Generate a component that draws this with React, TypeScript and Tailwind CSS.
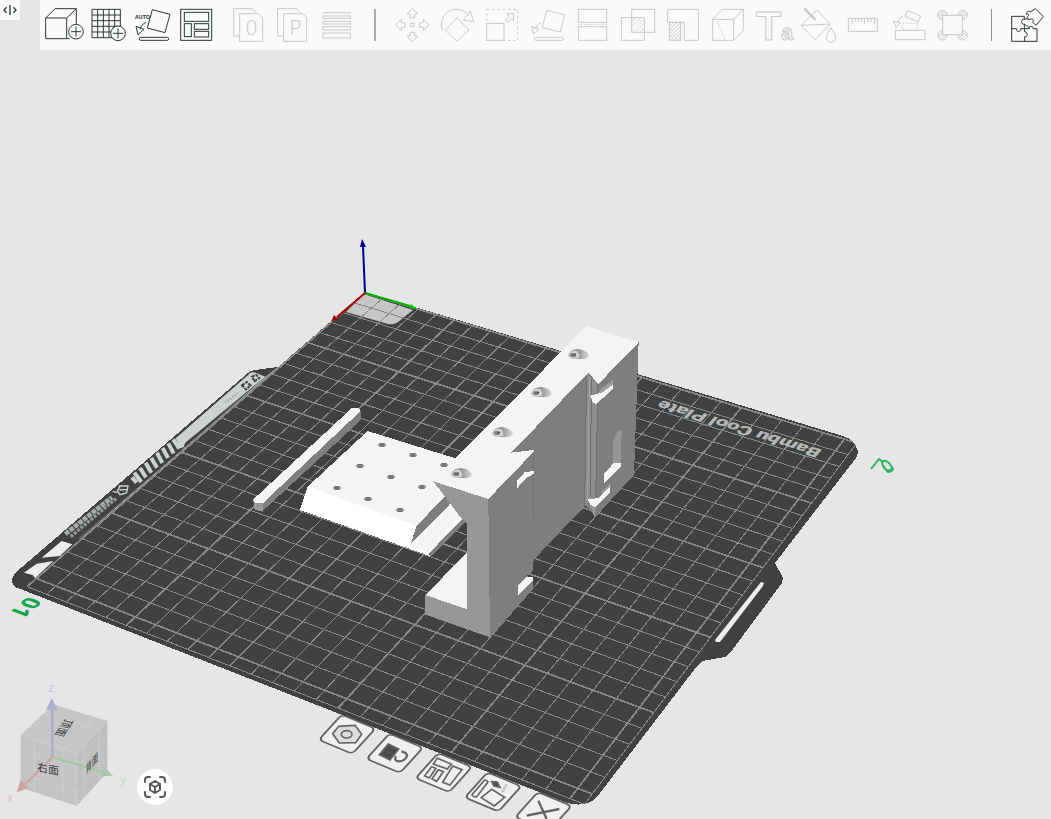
import React from "react";

type Tool = {
  label: string;
  // left edge of the icon in the drawing units of the toolbar sheet (3 units = 1px)
  x: number;
  art: React.ReactNode;
};

const fileTools: Tool[] = [
  {
    label: "Add",
    x: 126,
    art: (
      <>
        <path d="M137 54H200V116H137ZM137 54L165 26H229V74M200 54L229 26M200 116H208" />
        <circle cx="228" cy="95" r="22" />
        <path d="M228 80V110M213 95H243" />
      </>
    ),
  },
  {
    label: "Add plate",
    x: 258,
    art: (
      <>
        <path d="M276 28H361V113H276ZM293 28V113M310 28V113M327 28V113M344 28V113M276 45H361M276 62H361M276 79H361M276 96H361" />
        <circle cx="354" cy="100" r="22" fill="#fafafa" />
        <path d="M354 85V115M339 100H369" />
      </>
    ),
  },
  {
    label: "Auto orient",
    x: 390,
    art: (
      <>
        <text x="405" y="56" fontSize="16" className="fill-current stroke-none font-['Open_Sans',sans-serif] font-bold">AUTO</text>
        <path d="M457 29L510 43L495 98L442 84ZM437 67C427 72 422 81 420 88M408 79L432 88L414 104Z" />
        <rect x="418" y="112" width="88" height="9" rx="4" />
      </>
    ),
  },
  {
    label: "Arrange",
    x: 522,
    art: (
      <>
        <rect x="542" y="28" width="93" height="93" />
        <rect x="553" y="37" width="73" height="27" />
        <rect x="553" y="71" width="21" height="39" />
        <rect x="583" y="71" width="43" height="17" />
        <rect x="583" y="94" width="43" height="17" />
      </>
    ),
  },
];

const pages = "M721 108H704V26H760L771 38M722 41H779L791 53V124H722Z";

const splitTools: Tool[] = [
  {
    label: "Split to objects",
    x: 681,
    art: (
      <>
        <path d={pages} />
        <text x="757" y="105" fontSize="62" textAnchor="middle" className="fill-current stroke-none font-['Open_Sans',sans-serif] font-light">0</text>
      </>
    ),
  },
  {
    label: "Split to parts",
    x: 813,
    art: (
      <>
        <path d={pages} transform="translate(132 0)" />
        <text x="890" y="105" fontSize="62" textAnchor="middle" className="fill-current stroke-none font-['Open_Sans',sans-serif] font-light">P</text>
      </>
    ),
  },
  {
    label: "Variable layer height",
    x: 945,
    art: (
      <>
        <path d="M971 38H1055" />
        <rect x="972" y="48" width="82" height="7" />
        <rect x="972" y="64" width="82" height="8" />
        <rect x="972" y="80" width="82" height="10" />
        <rect x="972" y="99" width="82" height="15" />
      </>
    ),
  },
];

const moveArrow = "M187 25L204 42H194V53H180V42H170Z";

const editTools: Tool[] = [
  {
    label: "Move",
    x: 120,
    art: (
      <>
        <rect x="182" y="70" width="10" height="10" />
        <path d={moveArrow} />
        <path d={moveArrow} transform="rotate(90 187 75)" />
        <path d={moveArrow} transform="rotate(180 187 75)" />
        <path d={moveArrow} transform="rotate(270 187 75)" />
      </>
    ),
  },
  {
    label: "Rotate",
    x: 255,
    art: <path d="M321 54L357 90L321 124L286 90ZM277 90C265 56 290 28 318 28C338 28 350 38 357 48M361 33L371 65L340 60Z" />,
  },
  {
    label: "Scale",
    x: 390,
    art: (
      <>
        <rect x="410" y="28" width="93" height="93" strokeDasharray="8 8" />
        <rect x="410" y="70" width="52" height="51" fill="#fafafa" />
        <path d="M491 41V62L485 56L474 67L467 60L478 49L471 41Z" />
      </>
    ),
  },
  {
    label: "Lay on face",
    x: 525,
    art: (
      <>
        <path d="M590 31L644 44L631 96L577 83ZM573 68C563 72 558 80 556 87M545 79L567 88L551 103Z" />
        <rect x="553" y="112" width="88" height="9" rx="4" />
      </>
    ),
  },
  {
    label: "Cut",
    x: 660,
    art: (
      <>
        <rect x="685" y="28" width="85" height="39" />
        <path d="M684 73H772" strokeDasharray="5 4" />
        <rect x="685" y="80" width="85" height="41" />
      </>
    ),
  },
  {
    label: "Mesh boolean",
    x: 795,
    art: (
      <>
        <rect x="845" y="28" width="69" height="69" />
        <rect x="814" y="53" width="69" height="68" />
        <path d="M846 66L858 54M846 80L872 54M846 94L882 58M856 96L882 70M870 96L882 84" strokeWidth="2" />
      </>
    ),
  },
  {
    label: "Support painting",
    x: 930,
    art: (
      <>
        <path d="M953 28H1045V121H1003V67H953Z" />
        <rect x="958" y="67" width="34" height="54" />
        <path d="M958 80L971 67M958 91L982 67M958 102L992 68M958 113L992 79M960 121L992 90M971 121L992 101M982 121L992 112" strokeWidth="3" />
      </>
    ),
  },
];

const paintTools: Tool[] = [
  {
    label: "Seam painting",
    x: 15,
    art: (
      <>
        <path d="M38 58H101V121H38ZM38 58L66 28H130V92L101 121M101 58L130 28" />
        <path d="M53 62C54 84 66 82 66 100C67 108 74 108 74 120" strokeDasharray="4 4" />
      </>
    ),
  },
  {
    label: "Text shape",
    x: 150,
    art: (
      <text x="168" y="121" fontSize="124" className="font-['Liberation_Sans',sans-serif] font-bold">
        T<tspan fontSize="64">a</tspan>
      </text>
    ),
  },
  {
    label: "Color painting",
    x: 285,
    art: (
      <>
        <path d="M303 76L351 30L391 72L345 119ZM303 76L391 72" />
        <path d="M313 26L347 60" strokeWidth="7" />
        <path d="M393 83C383 98 379 105 379 113a14 14 0 0 0 28 0C407 105 402 98 393 83Z" />
      </>
    ),
  },
  {
    label: "Measure",
    x: 420,
    art: (
      <>
        <rect x="445" y="55" width="87" height="39" />
        <path d="M456 56V72M466 56V66M475 56V66M484 56V66M493 56V72M503 56V66M513 56V66M523 56V72" strokeWidth="3" />
      </>
    ),
  },
  {
    label: "Assemble",
    x: 555,
    art: (
      <>
        <rect x="586" y="91" width="89" height="28" />
        <rect x="608" y="70" width="44" height="20" strokeDasharray="4 4" />
        <path d="M622 31L662 48L655 66L615 49ZM580 63L602 68L588 82ZM593 66C597 56 602 52 608 49" />
      </>
    ),
  },
  {
    label: "Brim ears",
    x: 690,
    art: (
      <>
        {[[727, 45], [788, 45], [727, 106], [788, 106]].map(([cx, cy]) => (
          <g key={`${cx}-${cy}`} transform={`translate(${cx} ${cy})`} strokeWidth="3">
            <circle r="14" />
            <path d="M-13 3L3 -13M-10 9L9 -10M-4 13L13 -4" />
          </g>
        ))}
        <rect x="728" y="46" width="59" height="58" fill="#fafafa" />
      </>
    ),
  },
];

const assembly: Tool = {
  label: "Assembly view",
  x: 912,
  art: (
    <path d="M935 49H973V58C962 54 962 76 973 72V86H962C966 97 946 97 950 86H935ZM935 86V124H1011V86H999C1003 77 984 77 988 86H974V96C984 93 984 114 974 110V124M1006 26L1030 50L1008 76L998 67C1004 58 994 52 989 60L981 52C990 46 984 38 979 43C978 34 986 32 990 36ZM973 72C978 80 988 76 988 86M973 58C980 54 984 58 989 60" />
  ),
};

function ToolButton({ tool, wide, muted }: { tool: Tool; wide?: boolean; muted?: boolean }) {
  return (
    <button
      type="button"
      aria-label={tool.label}
      disabled={muted}
      className={`h-[50px] shrink-0 ${wide ? "w-[45px]" : "w-11"} ${muted ? "text-[#c8c8c8]" : "text-[#2c3638]"}`}
    >
      <svg
        viewBox={`${tool.x} 0 ${wide ? 135 : 132} 150`}
        className="h-full w-full"
        fill="none"
        stroke="currentColor"
        strokeWidth="3"
      >
        {tool.art}
      </svg>
    </button>
  );
}

function Toolbar() {
  return (
    <header className="flex items-start bg-[#e6e6e6]">
      <button type="button" aria-label="Toggle sidebar" className="mr-5 h-5 w-5 shrink-0 bg-[#fafafa] text-[#2c3638]">
        <svg viewBox="0 0 60 60" className="h-full w-full" fill="none" stroke="currentColor" strokeWidth="4">
          <path d="M20 22L12 30L20 38M30 15V45M40 22L48 30L40 38" />
        </svg>
      </button>
      <div className="flex min-w-0 flex-1 items-center overflow-hidden bg-[#fafafa] pl-0.5">
        {fileTools.map((t) => (
          <ToolButton key={t.label} tool={t} />
        ))}
        <div className="w-2 shrink-0" />
        {splitTools.map((t) => (
          <ToolButton key={t.label} tool={t} muted />
        ))}
        <span className="mr-3.5 ml-4 h-8 w-0.5 shrink-0 bg-[#a6aaaa]" />
        {[...editTools, ...paintTools].map((t) => (
          <ToolButton key={t.label} tool={t} wide muted />
        ))}
        <span className="mr-3 ml-4 h-8 w-px shrink-0 bg-[#8d9292]" />
        <ToolButton tool={assembly} />
      </div>
    </header>
  );
}

// Camera projection of the 256 x 256 mm bed, origin at the back-left corner
const BED = 256;
function project(x: number, y: number) {
  const u = x / BED;
  const v = y / BED;
  const w = 1 - 0.1615 * u - 0.09 * v;
  return [(365 - 342.4 * u + 414.9 * v) / w, (293 + 198.9 * u + 110.1 * v) / w];
}

function bedLine(x1: number, y1: number, x2: number, y2: number) {
  const [ax, ay] = project(x1, y1);
  const [bx, by] = project(x2, y2);
  return `M${ax.toFixed(1)} ${ay.toFixed(1)}L${bx.toFixed(1)} ${by.toFixed(1)}`;
}

function gridPath(bold: boolean) {
  let d = "";
  for (let i = 0; i <= 25; i++) {
    if ((i % 5 === 0) !== bold) continue;
    d += bedLine(i * 10, 0, i * 10, BED) + bedLine(0, i * 10, BED, i * 10);
  }
  if (!bold) d += bedLine(BED, 0, BED, BED) + bedLine(0, BED, BED, BED);
  return d;
}

const plateOutline =
  "M365 292L843 436Q855 440 857 449Q859 453 856 458L775 563L783 578L782 583L730 653L725 657L702 661L694 670L597 797Q587 808 567 803L23 590L15 587Q9 581 15 573L248 373Q251 370 255 370L278 367Z";

function Plate() {
  return (
    <g>
      <clipPath id="plate">
        <path d={plateOutline} />
      </clipPath>
      <path d={plateOutline} fill="#404241" shapeRendering="crispEdges" />

      {/* side strip with logo and markings */}
      <g transform="translate(0 360) scale(0.3333)">
        <path d="M752 38Q762 34 775 42L796 50L556 248L550 262L528 234Z" fill="#cdd1d1" />
        <path d="M396 352L410 368M403 338L424 366M420 324L438 352M437 308L454 338M454 294L471 323M471 278L487 309M488 264L504 294M505 250L521 280M520 238L538 266M532 232L548 262" stroke="#cdd1d1" strokeWidth="12" />
        <path d="M756 50L768 44L778 54L764 64ZM726 76L740 66L752 76L738 88Z" fill="none" stroke="#404241" strokeWidth="6" strokeDasharray="9 3" />
        <path d="M676 128L716 98" stroke="#9fa3a3" strokeWidth="8" strokeDasharray="3 6" />
        <path d="M356 378L384 378L380 398L360 404L352 392L362 376M358 390L382 388M338 394L352 398" stroke="#cdd1d1" strokeWidth="4" fill="none" />
        <path d="M196 522L336 412" stroke="#a6a9a9" strokeWidth="14" strokeDasharray="14 3" />
        <path d="M212 530L350 414" stroke="#949797" strokeWidth="10" strokeDasharray="9 4" />
        <path d="M860 2L796 54L240 540" stroke="#cdd1d1" strokeWidth="4" fill="none" />
        <path d="M125 593L185 543L217 553L180 588ZM72 638L110 611L160 603L105 655L98 645Z" fill="#ececec" />
        <path d="M832 25L236 536" stroke="#6c6f6e" strokeWidth="3" />
      </g>

      <path d="M364 294L413 310L398 322Q394 325 388 324L346 312Z" fill="#c4c7c6" />
      <g clipPath="url(#plate)" fill="none" stroke="#868987" shapeRendering="crispEdges">
        <path d={gridPath(false)} strokeWidth="1" />
        <path d={gridPath(true)} strokeWidth="1.7" />
      </g>

      {/* handle cut-out */}
      <path d="M761 582L764 583L763 586L720 642L716 642L715 640Z" fill="#ececec" />

      <text
        transform="matrix(-2 -0.62 0.96 -1.12 823 450)"
        fontSize="10"
        fill="#b5b8b7"
        className="font-['Roboto',sans-serif] font-black"
      >
        Bambu Cool Plate
      </text>
      <text
        transform="matrix(-1.7 1.5 -2.1 -0.8 28 596)"
        fontSize="10"
        fill="#14a84b"
        className="font-['Open_Sans',sans-serif] font-bold"
      >
        01
      </text>
      <path d="M871 469L879 459L882 461M882 462Q885 459 889 463L893 469Q892 472 888 472L883 466ZM887 471L893 469" fill="none" stroke="#2ab45c" strokeWidth="2" />
    </g>
  );
}

function Axes() {
  return (
    <g strokeWidth="2">
      <path d="M365 293L363 246" stroke="#00008f" />
      <path d="M362 239L360 247L366 247Z" fill="#0000a0" />
      <path d="M365 293L410 306" stroke="#00b400" />
      <path d="M417 309L411 304L409 308Z" fill="#00c800" />
      <path d="M365 293L337 317" stroke="#b00000" />
      <path d="M331 322L334 315L338 319Z" fill="#a00000" />
    </g>
  );
}

const screwHoles = [[578, 354], [541, 392], [502, 432], [461, 473]];
const plateHoles = [
  [382, 445], [413, 455], [444, 465],
  [360, 466], [391, 477], [422, 487],
  [337, 488], [368, 499], [400, 510],
];

function Models() {
  return (
    <g shapeRendering="crispEdges">
      {/* thin bar */}
      <g transform="translate(240 390) scale(0.3333)">
        <path d="M40 328L335 55H356L363 64L70 342L45 338Z" fill="#f4f4f4" />
        <path d="M66 342L363 62V90L66 365Z" fill="#7e7e7e" />
        <path d="M40 330L45 338L68 340V365L42 358Z" fill="#999" />
      </g>

      {/* perforated plate */}
      <g transform="translate(240 390) scale(0.3333)">
        <path d="M383 123L720 228L613 325L530 407L203 290Z" fill="#f4f4f4" />
        <path d="M203 290L530 407L512 463L575 500L180 360Z" fill="#fff" />
        <path d="M530 407L613 322L634 340L512 464Z" fill="#7e7e7e" />
        <path d="M634 338L670 388L572 492L510 465Z" fill="#f4f4f4" />
        <path d="M510 463L568 488V498L505 474Z" fill="#fff" />
        <path d="M668 386L678 396L573 500L568 489Z" fill="#7e7e7e" />
      </g>
      {plateHoles.map(([cx, cy]) => (
        <g key={`${cx}-${cy}`}>
          <ellipse cx={cx} cy={cy} rx="4" ry="2" fill="#9a9a9a" />
          <path d={`M${cx - 2} ${cy - 2}H${cx + 2}V${cy + 2}H${cx - 2}Z`} fill="#777" />
        </g>
      ))}

      {/* bracket */}
      <g transform="translate(410 310) scale(0.3333)">
        <path d="M46 855L172 727V900Z" fill="#f4f4f4" />
        <path d="M235 567L304 427L530 188L686 95L672 495L555 622L540 598L525 588L375 745L369 757V783L350 798L368 804V838L240 982Z" fill="#7e7e7e" />
        <path d="M530 48L686 97L565 222L535 188L304 428L371 420V426L235 567L68 514Z" fill="#f4f4f4" />
        <path d="M70 514L235 567L240 982L46 914V855L171 898V640L150 620Z" fill="#979797" />
        <path d="M371 426V627" stroke="#727272" strokeWidth="3" />
        <path d="M321 537V512L344 487L371 483V491L348 505L330 524Z" fill="#f4f4f4" />
        <path d="M324 855V826L350 801H369V812L340 842Z" fill="#f4f4f4" />

        {/* dovetail groove */}
        <path d="M530 190L565 222L558 565L540 570L524 590Z" fill="#8f8f8f" />
        <path d="M530 195L524 588M545 208L540 562M564 222L557 565" stroke="#6f6f6f" strokeWidth="3" />
        <path d="M538 205L533 570" stroke="#a0a0a0" strokeWidth="3" />
        <path d="M564 246L608 210V228L575 250H562Z" fill="#a0a0a0" />
        <path d="M540 257L560 252L580 246L608 224V237L560 282L548 277Z" fill="#f4f4f4" />
        <path d="M608 470L610 392Q616 364 635 360L633 470Z" fill="#969696" />
        <path d="M582 521V492L610 460H633V471Z" fill="#f4f4f4" />
        <path d="M577 545L601 521V532L577 560Z" fill="#a0a0a0" />
        <path d="M533 567L565 565L601 530V545L557 592L542 586Z" fill="#f4f4f4" />
        <path d="M538 582L557 592L555 622Z" fill="#999" />
      </g>
      {screwHoles.map(([cx, cy]) => (
        <g key={cx} transform={`translate(${cx} ${cy})`} shapeRendering="auto">
          <path d="M-10 1Q-7 -5 0 -5Q9 -4 11 1Q10 5 4 5L-5 5Q-9 4 -10 1Z" fill="url(#sink)" />
          <path d="M-10 1Q-6 -5 -1 -3Q2 0 1 4L-5 5Q-9 4 -10 1Z" fill="#d2d2d2" />
          <ellipse cx="-5" cy="1" rx="3" ry="2" fill="#7b7b7b" />
          <path d="M-4 1L-2 0" stroke="#333" strokeWidth="1" />
        </g>
      ))}
    </g>
  );
}

const bedIcons = [
  {
    x: 95,
    y: 44,
    art: (
      <>
        <path d="M68 101L86 79L135 76L155 103L137 128L88 129Z" fill="#dedede" />
        <ellipse cx="110" cy="103" rx="16" ry="11" />
      </>
    ),
  },
  {
    x: 238,
    y: 101,
    art: (
      <>
        <path d="M235 132L266 147L240 180L208 164Z" fill="#4c4c4c" />
        <path d="M258 168Q250 182 266 184Q284 184 290 170Q294 158 274 154" strokeWidth="7" />
      </>
    ),
  },
  {
    x: 385,
    y: 159,
    art: (
      <path d="M382 175L424 192L412 207L370 192ZM428 198L456 209L420 255L398 247ZM365 200L378 205L358 234L344 228ZM385 209L400 215L380 244L366 237Z" />
    ),
  },
  {
    x: 533,
    y: 217,
    art: (
      <>
        <path d="M524 240Q532 240 534 246L500 290Q488 292 486 284ZM545 268L584 292L553 318L514 293Z" />
        <path d="M545 245L562 246L570 262L552 258Z" fill="#4c4c4c" />
        <path d="M590 254L576 278" strokeWidth="9" strokeDasharray="4 3" stroke="#aaa" />
      </>
    ),
  },
  {
    x: 684,
    y: 276,
    art: <path d="M685 302L710 357M748 327L650 347" strokeWidth="7" />,
  },
];

function BedIcons() {
  return (
    <g transform="translate(310 700) scale(0.3333)" fill="none" stroke="#646464" strokeWidth="5">
      {bedIcons.map((icon) => (
        <g key={icon.x}>
          <rect
            width="24"
            height="24"
            rx="3"
            transform={`matrix(4.2 1.75 -2.85 3.15 ${icon.x} ${icon.y})`}
            fill="#f0f0f0"
            strokeWidth="1.3"
          />
          {icon.art}
        </g>
      ))}
    </g>
  );
}

function ViewCube() {
  return (
    <g>
      <g transform="translate(0 670) scale(0.3333)">
        <path d="M160 103L322 153L230 250L62 195Z" fill="#c6c6c6" />
        <path d="M62 195L230 250V408L62 353Z" fill="#c4c4c4" />
        <path d="M230 250L322 153V307L230 408Z" fill="#c0c0c0" />
        <path
          d="M62 195L230 250L322 153M230 250V408M104 209V367M189 236V395M62 238L230 292L322 194M62 312L230 367L322 266M253 226V384M298 178V334M90 170L256 224M132 130L296 180M104 209L200 115M189 236L282 141"
          fill="none"
          stroke="#d2d2d2"
          strokeWidth="2"
        />
        <path d="M157 262V116" stroke="#aeaed0" strokeWidth="8" />
        <path d="M155 85L173 120H138Z" fill="#aeaed0" />
        <path d="M157 262L312 307" stroke="#a6c8a8" strokeWidth="7" />
        <path d="M340 317L314 293L304 319Z" fill="#a6c8a8" />
        <path d="M157 262L72 345" stroke="#cda4a4" strokeWidth="7" />
        <path d="M50 367L62 330L85 353Z" fill="#cda4a4" />
      </g>
      <g fontSize="12" textAnchor="middle">
        <text x="51" y="692" fill="#c3c3de">z</text>
        <text x="123" y="784" fill="#bcdcbe">y</text>
        <text x="10" y="802" fill="#e0bfbf">x</text>
      </g>
      <g fontSize="11" fill="#3a3a3a" textAnchor="middle" className="font-['Noto_Sans_CJK_SC',sans-serif]">
        <text transform="matrix(1 0.2 0 1 48 773)">右面</text>
        <text transform="matrix(0.56 -0.66 0 1 92 767)">背面</text>
        <text transform="matrix(-0.5 0.75 -1 -0.25 60 727)">顶面</text>
      </g>
    </g>
  );
}

export default function App() {
  return (
    <div className="flex min-h-screen flex-col bg-[#e6e6e6] font-['Open_Sans',sans-serif]">
      <Toolbar />
      <main className="relative flex flex-1 flex-col overflow-hidden">
        <svg viewBox="0 50 1051 769" preserveAspectRatio="xMidYMid slice" className="w-full flex-1" role="img" aria-label="Build plate">
          <defs>
            <linearGradient id="sink">
              <stop offset="0.4" stopColor="#8a8a8a" />
              <stop offset="1" stopColor="#dadada" />
            </linearGradient>
          </defs>
          <Plate />
          <BedIcons />
          <Axes />
          <Models />
          <ViewCube />
        </svg>
        <button
          type="button"
          aria-label="Fit view"
          className="absolute bottom-3.5 left-[137px] flex h-9 w-9 items-center justify-center rounded-full bg-[#fcfcfc] text-[#595959]"
        >
          <svg viewBox="0 0 24 24" className="h-6 w-6" fill="none" stroke="currentColor" strokeWidth="2" strokeLinecap="round" strokeLinejoin="round">
            <path d="M2 7V5Q2 2 5 2H7M17 2H19Q22 2 22 5V7M22 17V19Q22 22 19 22H17M7 22H5Q2 22 2 19V17" />
            <path d="M12 6L17 9V15L12 18L7 15V9ZM7 9L12 12L17 9M12 12V18" />
          </svg>
        </button>
      </main>
    </div>
  );
}
